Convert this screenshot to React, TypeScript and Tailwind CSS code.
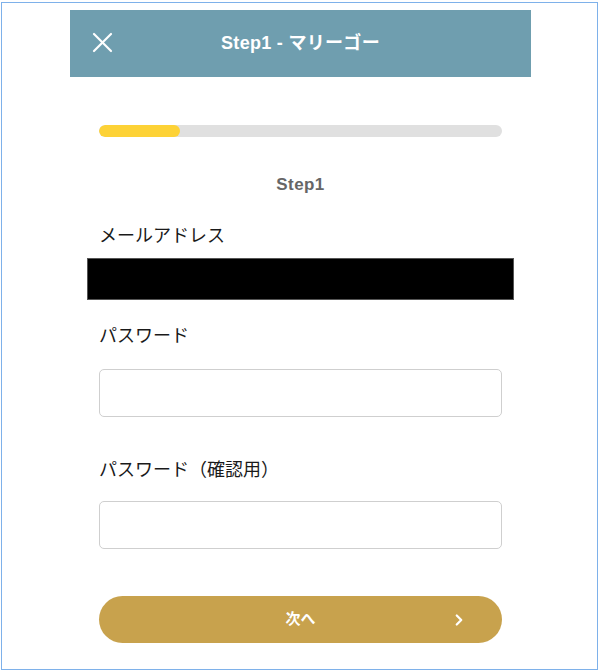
import { ChevronRight } from 'lucide-react'

const jp = 'font-["Liberation_Sans","Noto_Sans_CJK_JP",sans-serif]'

function Field({ label, className }: { label: string; className: string }) {
  return (
    <label className={`${className} block text-[18px] leading-[26px] text-[#1a1a1a] ${jp}`}>{label}</label>
  )
}

export default function App() {
  return (
    <div className="w-[601px] h-[671px] bg-white overflow-hidden">
      <div className="ml-[1px] mt-[2px] w-[597px] h-[668px] border border-[#7eb1ea]">
        <div className="ml-[68px] mt-[7px] w-[461px]">
          <header className="relative h-[67px] bg-[#6f9eaf] flex items-center justify-center">
            <button className="absolute left-[22px] top-[22px] text-white" aria-label="close">
              <svg width="21" height="21" viewBox="0 0 21 21" fill="none" stroke="currentColor" strokeWidth="2.2" strokeLinecap="round">
                <line x1="2" y1="2" x2="19" y2="19" />
                <line x1="19" y1="2" x2="2" y2="19" />
              </svg>
            </button>
            <h1 className={`text-white text-[18px] font-semibold tracking-[0.3px] ${jp}`}>Step1 - マリーゴー</h1>
          </header>

          <div className="px-[29px]">
            <div className="mt-[48px] h-[12px] rounded-full bg-[#e0e0e0] overflow-hidden">
              <div className="h-full w-[81px] rounded-full bg-[#fdd236]" />
            </div>

            <p className='mt-[38px] text-center text-[17px] leading-[20px] font-bold tracking-[0.4px] text-[#666666] font-["Liberation_Sans",sans-serif]'>
              Step1
            </p>

            <Field label="メールアドレス" className="mt-[28px]" />
            <div className="mt-[9px] -mx-[12px] h-[42px] bg-black border border-[#555]" />

            <Field label="パスワード" className="mt-[23px]" />
            <input type="password" className="mt-[20px] block w-full h-[48px] rounded-[5px] border border-[#cfcfcf] bg-white" />

            <Field label="パスワード（確認用）" className="mt-[40px]" />
            <input type="password" className="mt-[18px] block w-full h-[48px] rounded-[5px] border border-[#cfcfcf] bg-white" />

            <button className="relative mt-[47px] w-full h-[47px] rounded-full bg-[#c8a24d] flex items-center justify-center">
              <span className={`text-white text-[15px] font-bold ${jp}`}>次へ</span>
              <ChevronRight size={18} strokeWidth={3} className="absolute right-[34px] text-white" />
            </button>
          </div>
        </div>
      </div>
    </div>
  )
}
